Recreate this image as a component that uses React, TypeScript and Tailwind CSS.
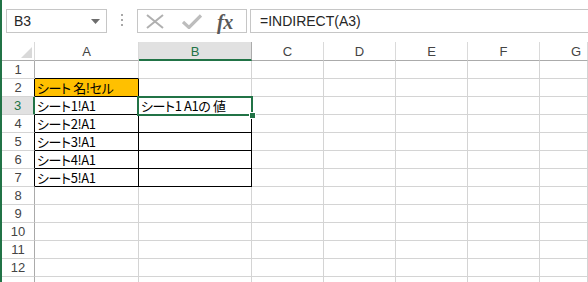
import React from "react";

const cols = [
  { k: "A", w: 104 },
  { k: "B", w: 113 },
  { k: "C", w: 72 },
  { k: "D", w: 72 },
  { k: "E", w: 72 },
  { k: "F", w: 72 },
  { k: "G", w: 48 },
];

const data: Record<string, string> = {
  A2: "シート 名!セル",
  A3: "シート1!A1",
  A4: "シート2!A1",
  A5: "シート3!A1",
  A6: "シート4!A1",
  A7: "シート5!A1",
  B3: "シート1 A1の 値",
};

function cellClasses(col: string, row: number): string {
  const inTable =
    (col === "A" && row >= 2 && row <= 7) || (col === "B" && row >= 3 && row <= 7);
  const right = inTable ? "border-r-black" : "border-r-[#d4d4d4]";
  let bottom = "border-b-[#d4d4d4]";
  if (inTable) bottom = "border-b-black";
  if (col === "A" && row === 1) bottom = "border-b-black";
  if (col === "B" && row === 2) bottom = "border-b-black";
  return `${right} ${bottom}`;
}

export default function App() {
  const rows = Array.from({ length: 13 }, (_, i) => i + 1);
  return (
    <div
      className="w-[588px] h-[282px] overflow-hidden bg-white border-l-2 border-[#217346] flex flex-col"
      style={{ fontFamily: '"Liberation Sans", Arial, sans-serif' }}
    >
      {/* toolbar */}
      <div className="h-[42px] shrink-0 flex items-start pt-[9px]">
        <div className="ml-[4px] w-[101px] h-[24px] border border-[#c6c6c6] flex items-center justify-between">
          <span className="pl-[7px] text-[14px] text-[#262626] leading-none">B3</span>
          <svg width="9" height="5" viewBox="0 0 9 5" className="mr-[6px]">
            <path d="M0 0 L9 0 L4.5 5 Z" fill="#6d6d6d" />
          </svg>
        </div>
        <div className="ml-[14px] mt-[5px] flex flex-col gap-[3px]">
          <div className="w-[2px] h-[2px] bg-[#a8a8a8]" />
          <div className="w-[2px] h-[2px] bg-[#a8a8a8]" />
          <div className="w-[2px] h-[2px] bg-[#a8a8a8]" />
        </div>
        <div className="ml-[14px] w-[110px] h-[24px] border border-[#c6c6c6] flex items-center">
          <svg width="18" height="15" viewBox="0 0 18 15" className="ml-[8px]">
            <path d="M1 1 L17 14 M17 1 L1 14" stroke="#b0b0b0" strokeWidth="2" fill="none" />
          </svg>
          <svg width="20" height="15" viewBox="0 0 20 15" className="ml-[18px]">
            <path d="M1 8 L7 13.5 L19 1.5" stroke="#bdbdbd" strokeWidth="3.2" fill="none" />
          </svg>
          <span
            className="ml-[15px] mt-[2px] italic font-bold text-[20px] leading-none text-[#595959] tracking-[-0.5px]"
            style={{ fontFamily: '"Liberation Serif", "Times New Roman", serif' }}
          >
            fx
          </span>
        </div>
        <div className="ml-[3px] flex-1 mr-[-4px] h-[24px] border border-[#c6c6c6] flex items-center">
          <span className="pl-[9px] text-[14px] text-[#262626] leading-none">=INDIRECT(A3)</span>
        </div>
      </div>

      {/* grid */}
      <div className="relative flex-1">
        {/* column header */}
        <div className="flex h-[19px]">
          <div className="w-[33px] shrink-0 border-r border-r-[#dadada] border-b border-b-[#ababab] flex items-end justify-end pr-[2px] pb-[2px]">
            <svg width="11" height="11" viewBox="0 0 11 11">
              <path d="M11 0 L11 11 L0 11 Z" fill="#d9d9d9" />
            </svg>
          </div>
          {cols.map((c) => {
            const sel = c.k === "B";
            return (
              <div
                key={c.k}
                style={{ width: c.w }}
                className={`shrink-0 flex items-center text-[13px] leading-none ${
                  sel
                    ? "bg-[#e1e1e1] border-b-2 border-b-[#217346] text-[#217346] border-r border-r-[#ababab]"
                    : "border-b border-b-[#ababab] border-r border-r-[#dadada] text-[#444444]"
                } ${c.k === "G" ? "justify-end pr-[6px]" : "justify-center"}`}
              >
                <span className={sel ? "mt-[1px]" : ""}>{c.k}</span>
              </div>
            );
          })}
        </div>
        {rows.map((r) => {
          const selRow = r === 3;
          return (
            <div key={r} className="flex h-[18px]">
              <div
                className={`w-[33px] shrink-0 flex items-center justify-center text-[13px] leading-none border-b border-b-[#d4d4d4] ${
                  selRow
                    ? "bg-[#e1e1e1] text-[#217346] border-r-2 border-r-[#217346]"
                    : r >= 2 && r <= 7
                    ? "text-[#444444] border-r border-r-black"
                    : "text-[#444444] border-r border-r-[#ababab]"
                }`}
              >
                {r <= 12 ? r : ""}
              </div>
              {cols.map((c) => {
                const id = `${c.k}${r}`;
                const txt = data[id];
                const orange = id === "A2";
                return (
                  <div
                    key={c.k}
                    style={{
                      width: c.w,
                      fontFamily: '"Noto Sans CJK JP", "Liberation Sans", sans-serif',
                    }}
                    className={`shrink-0 border-r border-b ${cellClasses(c.k, r)} ${
                      orange ? "bg-[#ffc000]" : ""
                    } flex items-center pl-[2px] pt-[1px] whitespace-nowrap text-[13px] leading-[14px] text-black [font-feature-settings:'palt'] tracking-[-0.4px]`}
                  >
                    {txt ?? ""}
                  </div>
                );
              })}
            </div>
          );
        })}
        {/* selection B3 */}
        <div className="absolute left-[135px] top-[54px] w-[116px] h-[20px] border-2 border-[#217346] pointer-events-none">
          <div className="absolute right-[-5px] bottom-[-5px] w-[7px] h-[7px] bg-[#217346] border border-white" />
        </div>
      </div>
    </div>
  );
}
